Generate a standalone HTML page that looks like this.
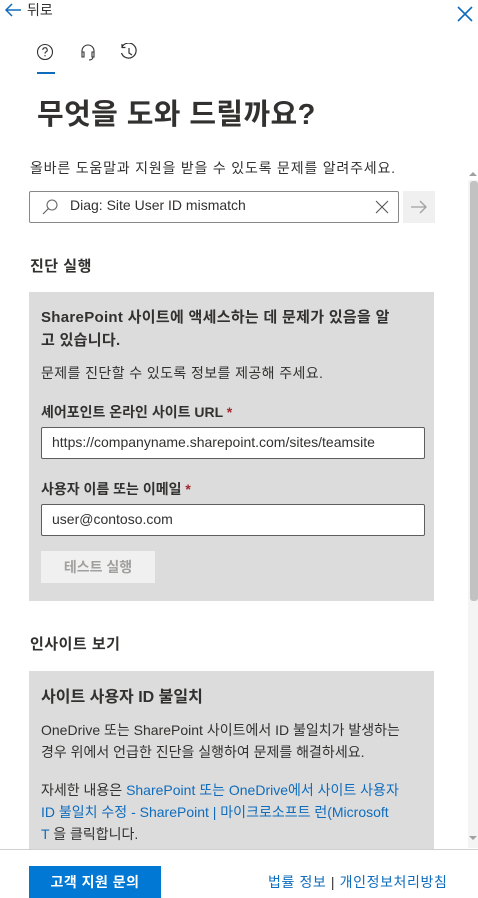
<!DOCTYPE html>
<html><head><meta charset="utf-8"><style>
*{margin:0;padding:0;box-sizing:border-box}
body{width:478px;height:896px;overflow:hidden;background:#fff;font-family:"Segoe UI","Liberation Sans","Noto Sans CJK KR",sans-serif;color:#323130;position:relative}
.a{position:absolute;white-space:nowrap}
.w{white-space:normal;word-break:keep-all}
.box{position:absolute;left:29px;width:405px;background:#dcdcdc}
.inp{position:absolute;left:41px;width:384px;height:32px;background:#fff;border:1px solid #605e5c;border-radius:2px;font-size:14px;padding:6px 10px;color:#323130}
a{color:#0f6cbd;text-decoration:none}
</style></head><body>
<svg class="a" style="left:4px;top:2px" width="18" height="16" viewBox="0 0 18 16"><path d="M8 2L2 8L8 14M2 8H17" stroke="#0f6cbd" stroke-width="1.5" fill="none"/></svg>
<div class="a" style="left:27px;top:0;font-size:14px">뒤로</div>
<svg class="a" style="left:457px;top:6px" width="16" height="16" viewBox="0 0 16 16"><path d="M1 1L15 15M15 1L1 15" stroke="#0f6cbd" stroke-width="1.6"/></svg>
<svg class="a" style="left:36px;top:43px" width="18" height="18" viewBox="0 0 18 18"><circle cx="9" cy="9" r="7.5" stroke="#333" fill="none" stroke-width="1.1"/><path d="M6.8 7a2.2 2.2 0 1 1 3 2c-.7.3-.8.8-.8 1.6" stroke="#333" fill="none" stroke-width="1.1"/><circle cx="9" cy="12.8" r=".7" fill="#333"/></svg>
<svg class="a" style="left:79px;top:43px" width="18" height="20" viewBox="0 0 18 20"><path d="M3 11V8a6 6 0 0 1 12 0v3M3 9h2v5H3zM13 9h2v5h-2zM14 14c0 2-2 3-4 3" stroke="#333" fill="none" stroke-width="1.1"/></svg>
<svg class="a" style="left:119px;top:43px" width="20" height="19" viewBox="0 0 20 19"><path d="M3 4A7.5 7.5 0 1 1 2.5 10M3 1v3.5h3.5M10 5v5l3 2" stroke="#333" fill="none" stroke-width="1.2"/></svg>
<div class="a" style="left:37px;top:72px;width:18px;height:2px;background:#0f6cbd"></div>
<div class="a" style="left:37px;top:91px;font-size:29px;font-weight:bold;color:#323130;letter-spacing:0.4px">무엇을 도와 드릴까요?</div>
<div class="a" style="left:30px;top:158px;font-size:14px;letter-spacing:0.8px">올바른 도움말과 지원을 받을 수 있도록 문제를 알려주세요.</div>
<div class="a" style="left:29px;top:191px;width:370px;height:32px;border:1px solid #8a8886;border-radius:2px"></div>
<svg class="a" style="left:41px;top:198px" width="18" height="18" viewBox="0 0 18 18"><circle cx="11" cy="7" r="5" stroke="#666" fill="none" stroke-width="1.1"/><path d="M7.5 10.5L2 16" stroke="#666" stroke-width="1.2"/></svg>
<div class="a" style="left:70px;top:197px;font-size:14px">Diag: Site User ID mismatch</div>
<svg class="a" style="left:375px;top:200px" width="14" height="14" viewBox="0 0 14 14"><path d="M1 1L13 13M13 1L1 13" stroke="#555" stroke-width="1.1"/></svg>
<div class="a" style="left:403px;top:191px;width:32px;height:32px;background:#f0f0f0"></div>
<svg class="a" style="left:410px;top:199px" width="18" height="16" viewBox="0 0 18 16"><path d="M10 2L16 8L10 14M16 8H1" stroke="#a0a0a0" stroke-width="1.3" fill="none"/></svg>
<div class="a" style="left:30px;top:255px;font-size:15px;font-weight:600;letter-spacing:0.5px">진단 실행</div>
<div class="box" style="top:292px;height:309px"></div>
<div class="a" style="left:41px;top:306px;font-size:15px;font-weight:bold;line-height:23px;letter-spacing:0.3px">SharePoint 사이트에 액세스하는 데 문제가 있음을 알<br>고 있습니다.</div>
<div class="a" style="left:41px;top:363px;font-size:14px;letter-spacing:0.4px">문제를 진단할 수 있도록 정보를 제공해 주세요.</div>
<div class="a" style="left:41px;top:402px;font-size:14px;font-weight:600">셰어포인트 온라인 사이트 URL <span style="color:#a4262c">*</span></div>
<div class="inp" style="top:427px">https://companyname.sharepoint.com/sites/teamsite</div>
<div class="a" style="left:41px;top:479px;font-size:14px;font-weight:600">사용자 이름 또는 이메일 <span style="color:#a4262c">*</span></div>
<div class="inp" style="top:504px">user@contoso.com</div>
<div class="a" style="left:41px;top:551px;width:114px;height:32px;background:#f0f0f0;color:#a19f9d;font-size:14px;font-weight:600;text-align:center;line-height:32px">테스트 실행</div>
<div class="a" style="left:30px;top:633px;font-size:15px;font-weight:600;letter-spacing:0.5px">인사이트 보기</div>
<div class="box" style="top:671px;height:178px"></div>
<div class="a" style="left:41px;top:683px;font-size:16px;font-weight:600">사이트 사용자 ID 불일치</div>
<div class="a w" style="left:41px;top:719px;font-size:14px;line-height:22px;width:385px">OneDrive 또는 SharePoint 사이트에서 ID 불일치가 발생하는 경우 위에서 언급한 진단을 실행하여 문제를 해결하세요.</div>
<div class="a" style="left:41px;top:779px;font-size:14px;line-height:22px">자세한 내용은 <a>SharePoint 또는 OneDrive에서 사이트 사용자<br>ID 불일치 수정 - SharePoint | 마이크로소프트 런(Microsoft<br>T</a> 을 클릭합니다.</div>
<div class="a" style="left:468px;top:180px;width:10px;height:668px;background:#f4f4f4"></div>
<div class="a" style="left:470px;top:181px;width:8px;height:420px;background:#c2c2c2;border-radius:3px"></div>
<div class="a" style="left:469px;top:168px;width:0;height:0;border:4px solid transparent;border-bottom-color:#a0a0a0"></div>
<div class="a" style="left:469px;top:836px;width:0;height:0;border:4px solid transparent;border-top-color:#a0a0a0"></div>
<div class="a" style="left:0;top:849px;width:478px;height:1px;background:#d0d0d0"></div>
<div class="a" style="left:29px;top:866px;width:132px;height:32px;background:#0078d4;color:#fff;font-size:14px;font-weight:bold;text-align:center;line-height:32px;letter-spacing:0.5px">고객 지원 문의</div>
<div class="a" style="left:268px;top:872px;font-size:14px;letter-spacing:0.6px"><a>법률 정보</a> | <a>개인정보처리방침</a></div>
</body></html>
